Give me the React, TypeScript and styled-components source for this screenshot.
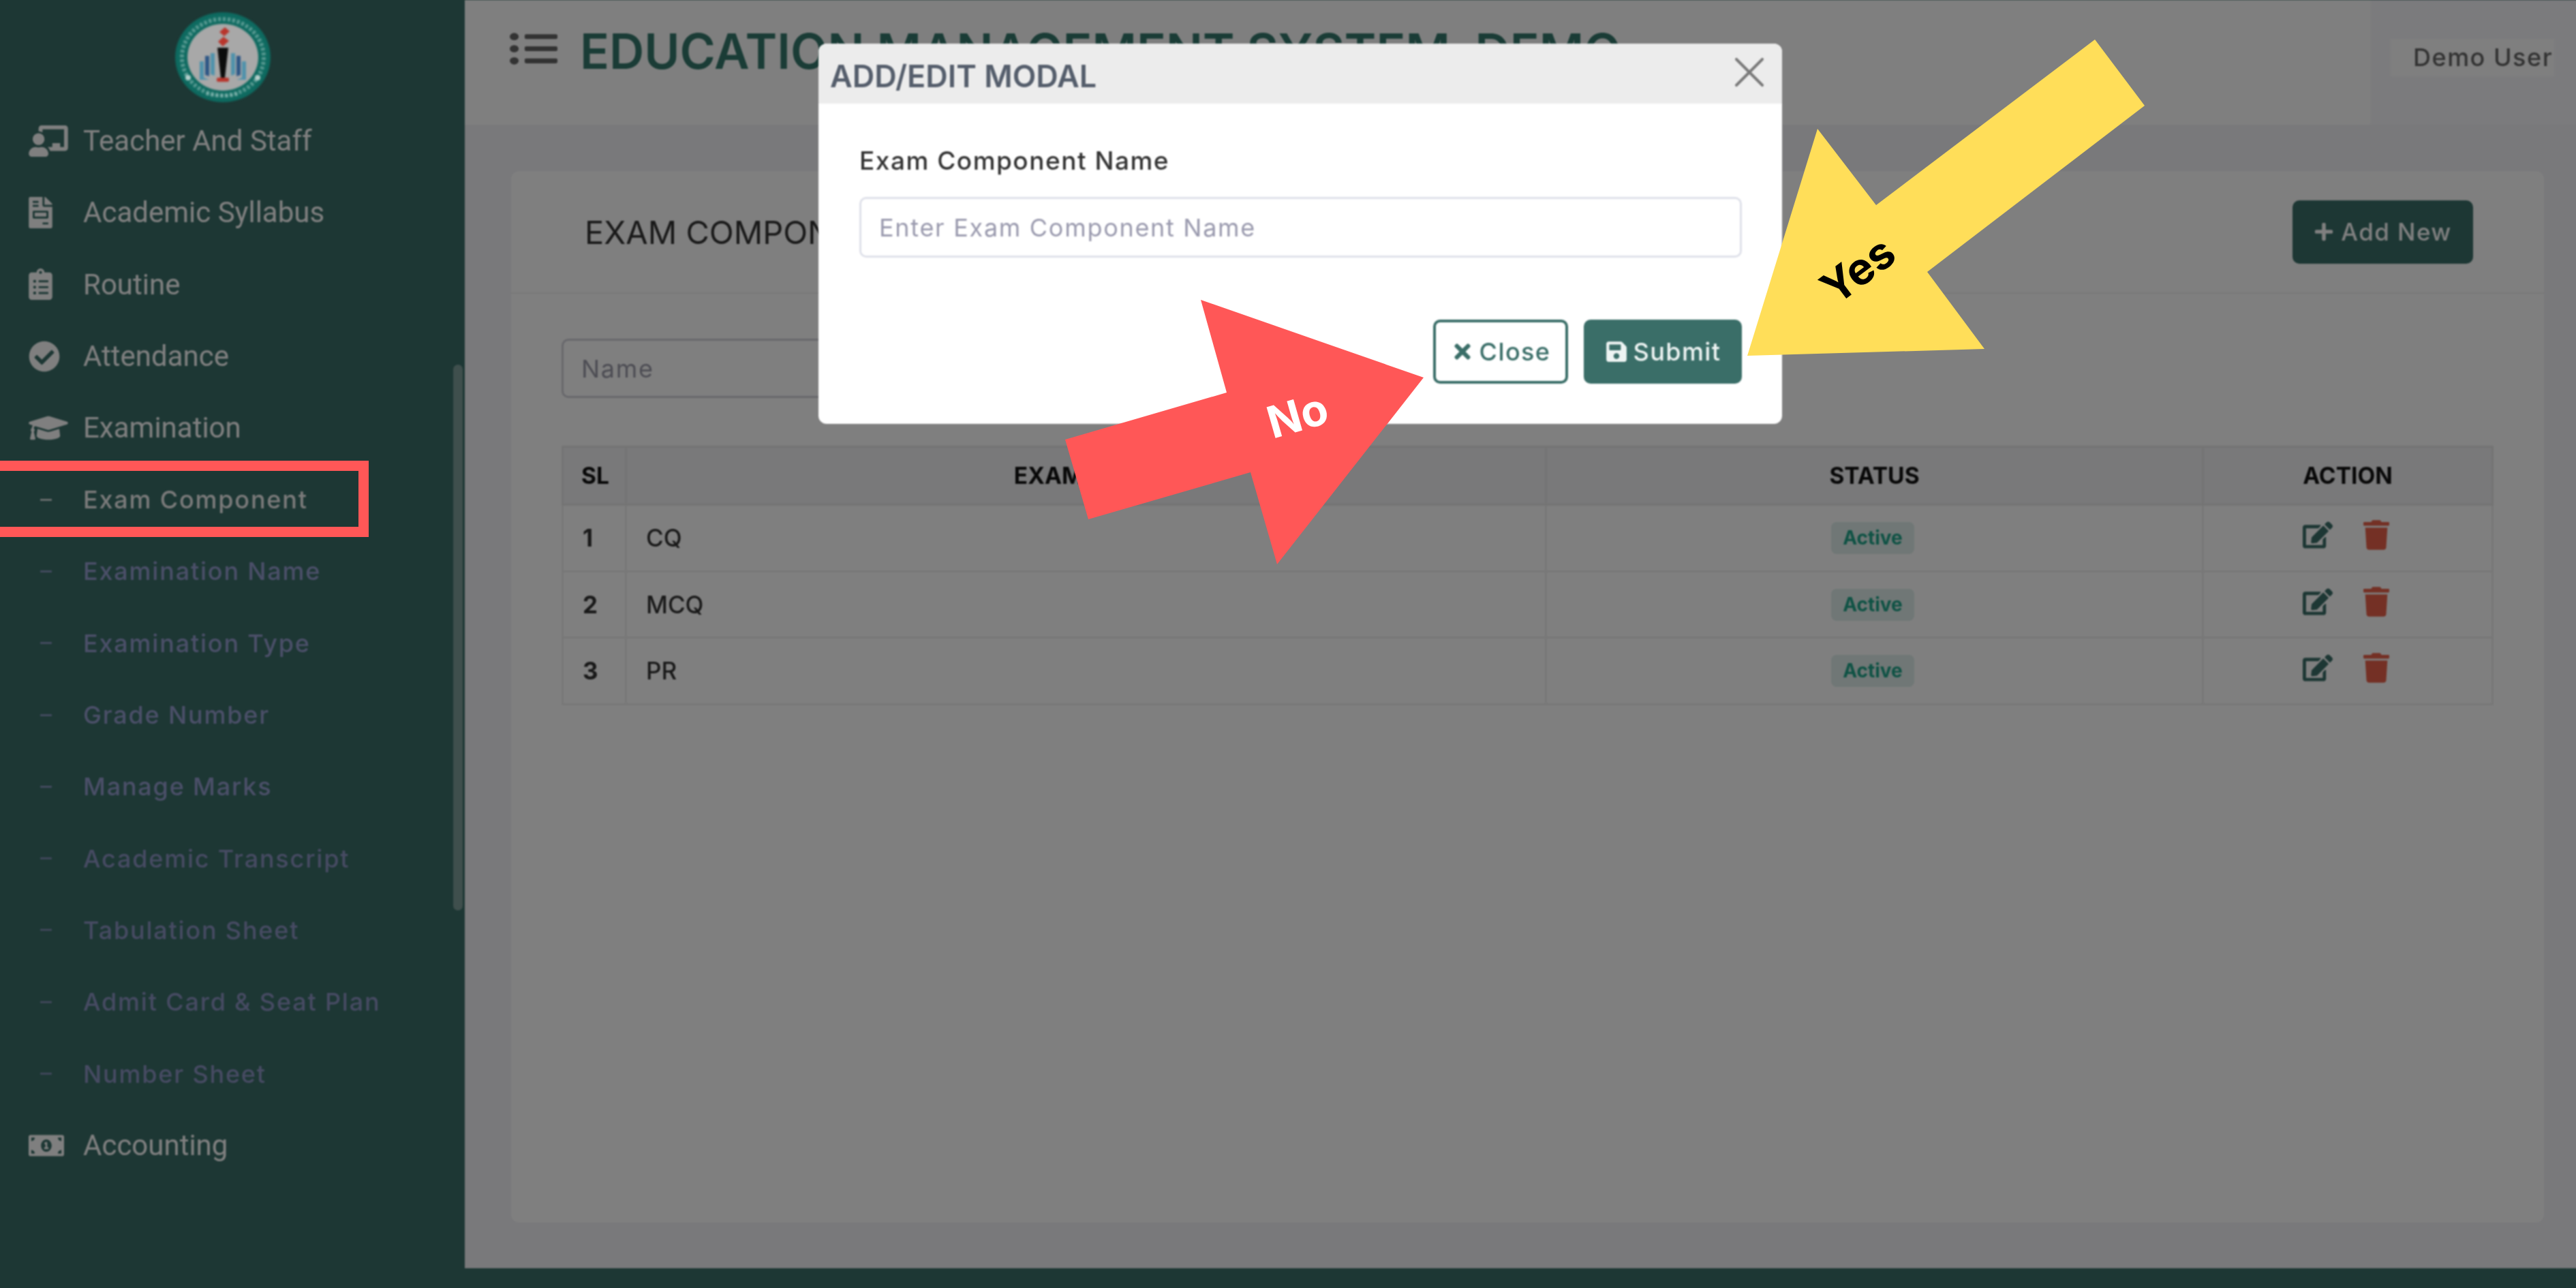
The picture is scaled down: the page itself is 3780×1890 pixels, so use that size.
import React from 'react';
import styled, { createGlobalStyle, css } from 'styled-components';
import {
  FaChalkboardTeacher,
  FaCheckCircle,
  FaClipboardList,
  FaEdit,
  FaFileInvoice,
  FaGraduationCap,
  FaListUl,
  FaMoneyBillAlt,
  FaPlus,
  FaSave,
  FaTimes,
  FaTrash,
} from 'react-icons/fa';
import { X } from 'lucide-react';

const POPPINS = `Inter, "Noto Sans", "Liberation Sans", sans-serif`;
const BRAND = '#3a6e68';

// the screen capture is an upscaled one, everything but the arrows is a bit soft
const soft = css`
  filter: blur(0.9px);
`;

const GlobalStyle = createGlobalStyle`
  html, body {
    margin: 0;
    padding: 0;
    background: ${BRAND};
    font-family: ${POPPINS};
    overflow: hidden;
  }
  * { box-sizing: border-box; }
`;

const Page = styled.div`
  position: relative;
  display: flex;
  width: 3780px;
  height: 1890px;
  overflow: hidden;
  background: ${BRAND};
`;

const Sidebar = styled.aside`
  ${soft}
  position: relative;
  display: flex;
  flex-direction: column;
  flex: 0 0 682px;
`;

const LogoSpace = styled.div`
  height: 154px;
`;

const LogoBadge = styled.div`
  position: absolute;
  left: 257px;
  top: 18px;
  width: 140px;
  height: 132px;
  filter: blur(1.4px);
`;

const Nav = styled.nav`
  display: flex;
  flex-direction: column;
`;

const NavItem = styled.div`
  display: flex;
  align-items: center;
  height: 105.3px;
  padding-left: 42px;
  color: #fff;
  font-family: Roboto, "Liberation Sans", sans-serif;
  font-size: 42px;
`;

const SubItem = styled(NavItem)<{ $active?: boolean; $dim?: boolean }>`
  font-family: ${POPPINS};
  font-size: 36px;
  font-weight: 500;
  letter-spacing: 1.8px;
  color: ${({ $active, $dim }) => ($active ? '#f4f4f4' : $dim ? '#8e96c6' : '#979fd2')};
`;

const IconSlot = styled.span<{ $w?: number; $h?: number }>`
  display: flex;
  align-items: center;
  flex: 0 0 80px;

  svg {
    width: ${({ $w }) => $w ?? 46}px;
    height: ${({ $h }) => $h ?? 46}px;
  }
`;

const Dash = styled.span`
  display: block;
  width: 17px;
  height: 3px;
  margin-left: 17px;
  background: currentColor;
  opacity: 0.8;
`;

const ScrollThumb = styled.div`
  position: absolute;
  top: 535px;
  right: 3px;
  width: 14px;
  height: 801px;
  border-radius: 7px;
  background: #7e9e9a;
`;

const Main = styled.div`
  ${soft}
  display: flex;
  flex-direction: column;
  flex: 1;
  height: 1861px;
  background: #f2f2f6;
`;

const TopBar = styled.header`
  display: flex;
  flex: 0 0 183px;
`;

const TitleBlock = styled.div`
  display: flex;
  align-items: flex-start;
  gap: 33px;
  flex: 0 0 2796px;
  padding: 43px 0 0 66px;
  background: #fff;
  color: #666;

  svg {
    width: 70px;
    height: 57px;
  }
`;

const AppTitle = styled.h1`
  margin: -6px 0 0;
  color: #34786c;
  font-size: 71px;
  font-weight: 600;
  line-height: 76px;
  white-space: nowrap;
`;

const UserBlock = styled.div`
  display: flex;
  align-items: flex-start;
  flex: 1;
  padding: 57px 0 0 30px;
  background: #f7f7fb;
`;

const UserName = styled.div`
  width: 240px;
  height: 55px;
  padding-left: 33px;
  background: #fefefe;
  color: #666;
  font-size: 36px;
  font-weight: 500;
  letter-spacing: 1.5px;
  line-height: 54px;
  white-space: nowrap;
`;

const Content = styled.main`
  flex: 1;
  padding: 68px 50px 67px 68px;
`;

const Card = styled.section`
  height: 100%;
  border-radius: 12px;
  background: #fff;
`;

const CardHeader = styled.div`
  display: flex;
  align-items: center;
  justify-content: space-between;
  height: 180px;
  padding: 0 104px 0 108px;
  border-bottom: 2px solid #f0f0f0;
`;

const CardTitle = styled.h2`
  margin: 0;
  color: #333;
  font-size: 47px;
  font-weight: 400;
`;

const AddButton = styled.button`
  display: flex;
  align-items: center;
  justify-content: center;
  gap: 10px;
  width: 265px;
  height: 93px;
  border: 0;
  border-radius: 10px;
  background: ${BRAND};
  color: #fff;
  font-family: ${POPPINS};
  font-size: 35px;
  font-weight: 500;
  letter-spacing: 1.4px;

  svg { width: 30px; height: 30px; }
`;

const CardBody = styled.div`
  padding: 66px 74px 0;
`;

const FilterInput = styled.input`
  display: block;
  width: 600px;
  height: 87px;
  padding: 0 26px;
  border: 3px solid #d0d0d8;
  border-radius: 10px;
  background: #fff;
  font-family: ${POPPINS};
  font-size: 36px;
  letter-spacing: 1.7px;

  &::placeholder { color: #9a9aa8; }
`;

const Table = styled.table`
  width: 2832px;
  margin-top: 70px;
  border-collapse: collapse;
  table-layout: fixed;
  color: #333;
  font-size: 35px;
`;

const Th = styled.th<{ $w: number }>`
  width: ${({ $w }) => $w}px;
  height: 85px;
  border: 3px solid #e8e8e8;
  background: #f2f2f4;
  color: #111;
  font-size: 33.5px;
  font-weight: 700;
  text-align: center;

  &:first-child { text-align: left; padding-left: 26px; }
`;

const Td = styled.td<{ $center?: boolean }>`
  height: 97.5px;
  padding: ${({ $center }) => ($center ? '0 5px 0 0' : '0 26px 0 28px')};
  border: 3px solid #f0f0f0;
  font-weight: 500;
  text-align: ${({ $center }) => ($center ? 'center' : 'left')};
`;

const SlCell = styled(Td)`
  font-weight: 700;
`;

const Badge = styled.span`
  display: inline-block;
  width: 122px;
  height: 47px;
  border-radius: 8px;
  background: #e0efec;
  color: #1fa58a;
  font-size: 28px;
  font-weight: 700;
  line-height: 47px;
  text-align: center;
`;

const Actions = styled.div`
  display: flex;
  justify-content: center;
  gap: 45px;
  margin-top: -8px;
`;

const EditIcon = styled(FaEdit)`
  width: 44px;
  height: 44px;
  color: ${BRAND};
`;

const TrashIcon = styled(FaTrash)`
  width: 38px;
  height: 44px;
  color: #e8614a;
`;

const Backdrop = styled.div`
  position: absolute;
  inset: 0;
  background: rgba(0, 0, 0, 0.5);
`;

const Modal = styled.div`
  ${soft}
  position: absolute;
  left: 1201px;
  top: 64px;
  width: 1414px;
  height: 558px;
  border-radius: 12px;
  overflow: hidden;
  background: #fff;
`;

const ModalHeader = styled.div`
  display: flex;
  align-items: center;
  justify-content: space-between;
  height: 88px;
  padding: 6px 10px 0 17px;
  background: #ececec;

  svg { margin-top: -10px; }
`;

const ModalTitle = styled.h3`
  margin: 0;
  color: #555e6c;
  font-size: 45px;
  font-weight: 600;
`;

const ModalBody = styled.div`
  padding: 57px 59px 0 60px;
`;

const FieldLabel = styled.label`
  display: block;
  margin-bottom: 26px;
  color: #333;
  font-size: 37px;
  font-weight: 500;
  letter-spacing: 1.5px;
  line-height: 54px;
`;

const NameInput = styled.input`
  display: block;
  width: 100%;
  height: 89px;
  padding: 0 26px;
  border: 3px solid #dfe1ea;
  border-radius: 10px;
  font-family: ${POPPINS};
  font-size: 36px;
  letter-spacing: 1.7px;

  &::placeholder { color: #9a9aae; }
`;

const ModalFooter = styled.div`
  display: flex;
  justify-content: flex-end;
  gap: 23px;
  margin-top: 91px;
`;

const FooterButton = styled.button<{ $solid?: boolean }>`
  display: flex;
  align-items: center;
  justify-content: center;
  gap: 8px;
  width: ${({ $solid }) => ($solid ? 232 : 198)}px;
  height: 94px;
  border: 4px solid ${BRAND};
  border-radius: 10px;
  background: ${({ $solid }) => ($solid ? BRAND : '#fff')};
  color: ${({ $solid }) => ($solid ? '#eef4f3' : BRAND)};
  font-family: ${POPPINS};
  font-size: 36px;
  font-weight: 500;
  letter-spacing: 1.4px;

  svg { width: 34px; height: 34px; }
`;

const RedBox = styled.div`
  position: absolute;
  left: 0;
  top: 676px;
  width: 541px;
  height: 112px;
  border: 15px solid #ff5757;
  border-left: 0;
`;

const ArrowSvg = styled.svg<{ $x: number; $y: number }>`
  position: absolute;
  left: ${({ $x }) => $x}px;
  top: ${({ $y }) => $y}px;
`;

const ArrowLabel = styled.span<{ $x: number; $y: number; $turn: number; $color: string }>`
  position: absolute;
  left: ${({ $x }) => $x}px;
  top: ${({ $y }) => $y}px;
  transform: translate(-50%, -50%) rotate(${({ $turn }) => $turn}deg);
  color: ${({ $color }) => $color};
  font-size: 65px;
  font-weight: 700;
`;

const Logo = () => (
  <svg width="140" height="132" viewBox="0 0 140 132">
    <ellipse cx="70" cy="66" rx="70" ry="66" fill="#0e6a60" />
    <ellipse cx="70" cy="66" rx="60" ry="56" fill="none" stroke="#9cc4bf" strokeWidth="6" strokeDasharray="4 3" opacity="0.55" />
    <ellipse cx="70" cy="66" rx="52" ry="49" fill="#a8a8a8" />
    <path d="M73 22 l7 6 -9 8 8 6 -9 8 -7 -7 9 -8 -7 -6z" fill="#b8352c" />
    <path d="M62 52 h16 l-5 44 h-6z" fill="#0c0c0c" />
    <rect x="61" y="96" width="18" height="6" rx="2" fill="#b8352c" />
    <path d="M36 72 h6 v24 l8 3 h-14z M104 72 h-6 v24 l-8 3 h14z" fill="#4f92ab" />
    <path d="M52 60 h6 v33 l-6 -2z M88 60 h-6 v33 l6 -2z" fill="#4f92ab" />
    <path d="M44 64 h6 v30 l-6 -2z M96 64 h-6 v30 l6 -2z" fill="#2c5686" />
    <circle cx="19" cy="96" r="4" fill="#b5cfcb" />
    <circle cx="121" cy="96" r="4" fill="#b5cfcb" />
    <path d="M46 119 q24 7 48 0" fill="none" stroke="#9cc4bf" strokeWidth="5" strokeDasharray="4 3" opacity="0.6" />
  </svg>
);

const navTop = [
  { label: 'Teacher And Staff', icon: <FaChalkboardTeacher />, w: 58, h: 46 },
  { label: 'Academic Syllabus', icon: <FaFileInvoice />, w: 35, h: 46 },
  { label: 'Routine', icon: <FaClipboardList />, w: 35, h: 46 },
  { label: 'Attendance', icon: <FaCheckCircle />, w: 46, h: 46 },
  { label: 'Examination', icon: <FaGraduationCap />, w: 58, h: 46 },
];

const subItems = [
  'Exam Component',
  'Examination Name',
  'Examination Type',
  'Grade Number',
  'Manage Marks',
  'Academic Transcript',
  'Tabulation Sheet',
  'Admit Card & Seat Plan',
  'Number Sheet',
];

const rows = ['CQ', 'MCQ', 'PR'];

const App = () => {
  return (
    <Page>
      <GlobalStyle />
      <Sidebar>
        <LogoSpace />
        <Nav>
          {navTop.map((item) => (
            <NavItem key={item.label}>
              <IconSlot $w={item.w} $h={item.h}>{item.icon}</IconSlot>
              {item.label}
            </NavItem>
          ))}
          {subItems.map((label, i) => (
            <SubItem key={label} $active={i === 0} $dim={i > 4}>
              <IconSlot><Dash /></IconSlot>
              {label}
            </SubItem>
          ))}
          <NavItem>
            <IconSlot $w={52} $h={42}><FaMoneyBillAlt /></IconSlot>
            Accounting
          </NavItem>
        </Nav>
        <ScrollThumb />
      </Sidebar>

      <Main>
        <TopBar>
          <TitleBlock>
            <FaListUl preserveAspectRatio="none" />
            <AppTitle>EDUCATION MANAGEMENT SYSTEM_DEMO</AppTitle>
          </TitleBlock>
          <UserBlock>
            <UserName>Demo User</UserName>
          </UserBlock>
        </TopBar>
        <Content>
          <Card>
            <CardHeader>
              <CardTitle>EXAM COMPONENT</CardTitle>
              <AddButton><FaPlus />Add New</AddButton>
            </CardHeader>
            <CardBody>
              <FilterInput placeholder="Name" />
              <Table>
                <thead>
                  <tr>
                    <Th $w={93}>SL</Th>
                    <Th $w={1350}>EXAM NAME</Th>
                    <Th $w={964}>STATUS</Th>
                    <Th $w={425}>ACTION</Th>
                  </tr>
                </thead>
                <tbody>
                  {rows.map((name, i) => (
                    <tr key={name}>
                      <SlCell>{i + 1}</SlCell>
                      <Td>{name}</Td>
                      <Td $center><Badge>Active</Badge></Td>
                      <Td $center>
                        <Actions>
                          <EditIcon />
                          <TrashIcon />
                        </Actions>
                      </Td>
                    </tr>
                  ))}
                </tbody>
              </Table>
            </CardBody>
          </Card>
        </Content>
      </Main>

      <Backdrop />

      <LogoBadge>
        <Logo />
      </LogoBadge>

      <Modal>
        <ModalHeader>
          <ModalTitle>ADD/EDIT MODAL</ModalTitle>
          <X size={76} strokeWidth={1.3} color="#7a7a7a" />
        </ModalHeader>
        <ModalBody>
          <FieldLabel>Exam Component Name</FieldLabel>
          <NameInput placeholder="Enter Exam Component Name" />
          <ModalFooter>
            <FooterButton><FaTimes />Close</FooterButton>
            <FooterButton $solid><FaSave />Submit</FooterButton>
          </ModalFooter>
        </ModalBody>
      </Modal>

      <RedBox />

      <ArrowSvg $x={1563} $y={440} width="526" height="388" viewBox="1563 440 526 388">
        <polygon fill="#ff5757" points="1762,440 2089,554 1874,828 1835,693 1597,762 1563,645 1800,576" />
      </ArrowSvg>
      <ArrowLabel $x={1904} $y={609} $turn={-16} $color="#fff">No</ArrowLabel>

      <ArrowSvg $x={2564} $y={58} width="583" height="464" viewBox="2564 58 583 464">
        <polygon fill="#ffde59" points="3074,58 3147,155 2828,399 2912,512 2564,522 2667,189 2753,301" />
      </ArrowSvg>
      <ArrowLabel $x={2726} $y={396} $turn={-37} $color="#000">Yes</ArrowLabel>
    </Page>
  );
};

export default App;
